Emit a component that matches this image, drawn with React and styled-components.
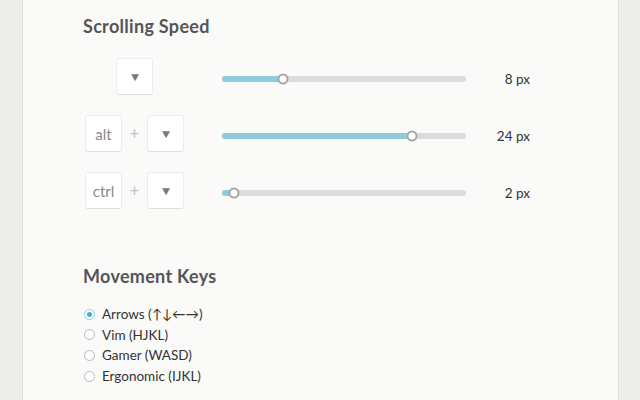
import React from 'react'
import styled, { createGlobalStyle } from 'styled-components';

const Global = createGlobalStyle`
  html, body {
    margin: 0;
    padding: 0;
    background: #ededeb;
  }
  body {
    font-family: Lato, "Open Sans", sans-serif;
    color: #333;
  }
`;

const speeds = [
    { id: 1, mod: null, value: 8, pct: 25 },
    { id: 2, mod: 'alt', value: 24, pct: 78 },
    { id: 3, mod: 'ctrl', value: 2, pct: 5 },
];

const movements = [
    { id: 'arrows', label: 'Arrows (↑↓←→)', checked: true },
    { id: 'vim', label: 'Vim (HJKL)' },
    { id: 'gamer', label: 'Gamer (WASD)' },
    { id: 'ergo', label: 'Ergonomic (IJKL)' },
];

const App = () => {
    return (
        <>
            <Global />
            <Panel>
                <Heading>Scrolling Speed</Heading>
                <Rows>
                    {speeds.map((s) => (
                        <SpeedRow key={s.id} {...s} />
                    ))}
                </Rows>
                <Heading $spaced>Movement Keys</Heading>
                <RadioList>
                    {movements.map((m) => (
                        <Radio key={m.id}>
                            <Dot $checked={m.checked} />
                            <span>{m.label}</span>
                        </Radio>
                    ))}
                </RadioList>
            </Panel>
        </>
    );
};

const SpeedRow = ({ mod, value, pct }) => {
    return (
        <Row>
            <Keys>
                {mod && <Key>{mod}</Key>}
                {mod && <Plus>+</Plus>}
                <Key><Arrow>▼</Arrow></Key>
            </Keys>
            <Track>
                <Fill style={{ width: pct + '%' }} />
                <Thumb style={{ left: pct + '%' }} />
            </Track>
            <Value>{value} px</Value>
        </Row>
    );
};

const Panel = styled.main`
    margin-left: 22px;
    width: 597px;
    min-height: 400px;
    box-sizing: border-box;
    background: #fafaf8;
    border-left: 1px solid #dcdcda;
    border-right: 1px solid #dcdcda;
    padding: 15px 0 0 60px;
`;

const Heading = styled.h2`
    margin: ${(p) => (p.$spaced ? '56px' : '0')} 0 0;
    font-size: 18px;
    font-weight: 700;
    letter-spacing: 0.3px;
    color: #555;
    line-height: 22px;
`;

const Rows = styled.div`
    display: flex;
    flex-direction: column;
    gap: 20px;
    margin-top: 21px;
    padding-left: 2px;
`;

const Row = styled.div`
    display: grid;
    grid-template-columns: 137px 244px 64px;
    align-items: center;
    height: 37px;
`;

const Keys = styled.div`
    width: 99px;
    display: flex;
    justify-content: center;
    align-items: center;
`;

const Key = styled.div`
    width: 37px;
    height: 37px;
    box-sizing: border-box;
    display: grid;
    place-items: center;
    background: #fff;
    border: 1px solid #ececea;
    border-bottom-color: #e0e0de;
    border-radius: 3px;
    color: #8a8a8a;
    font-size: 15px;
`;

const Arrow = styled.span`
    font-size: 12px;
    color: #7a7a7a;
    line-height: 1;
    transform: scaleX(1.1);
`;

const Plus = styled.span`
    width: 25px;
    text-align: center;
    color: #c4c4c4;
    font-size: 17px;
`;

const Track = styled.div`
    position: relative;
    height: 6px;
    margin-top: 4px;
    border-radius: 3px;
    background: #dcdcdc;
`;

const Fill = styled.div`
    height: 100%;
    border-radius: 3px;
    background: #90cadd;
`;

const Thumb = styled.span`
    position: absolute;
    top: 50%;
    width: 11px;
    height: 11px;
    box-sizing: border-box;
    border: 2px solid #a8a8a8;
    border-radius: 50%;
    background: #fff;
    transform: translate(-50%, -50%);
`;

const Value = styled.div`
    text-align: right;
    font-size: 13.5px;
    color: #333;
    margin-top: 4px;
`;

const RadioList = styled.div`
    display: flex;
    flex-direction: column;
    margin-top: 17px;
    padding-left: 1px;
`;

const Radio = styled.label`
    display: flex;
    align-items: center;
    gap: 7px;
    height: 20.6px;
    font-size: 13.5px;
    color: #333;
`;

const Dot = styled.span`
    width: 11px;
    height: 11px;
    box-sizing: border-box;
    border-radius: 50%;
    background: #fff;
    border: 1.5px solid ${(p) => (p.$checked ? '#8fcde0' : '#b8b8b8')};
    display: grid;
    place-items: center;
    &::after {
        content: '';
        width: 5px;
        height: 5px;
        border-radius: 50%;
        background: ${(p) => (p.$checked ? '#4ba9d1' : 'transparent')};
    }
`;

export default App
